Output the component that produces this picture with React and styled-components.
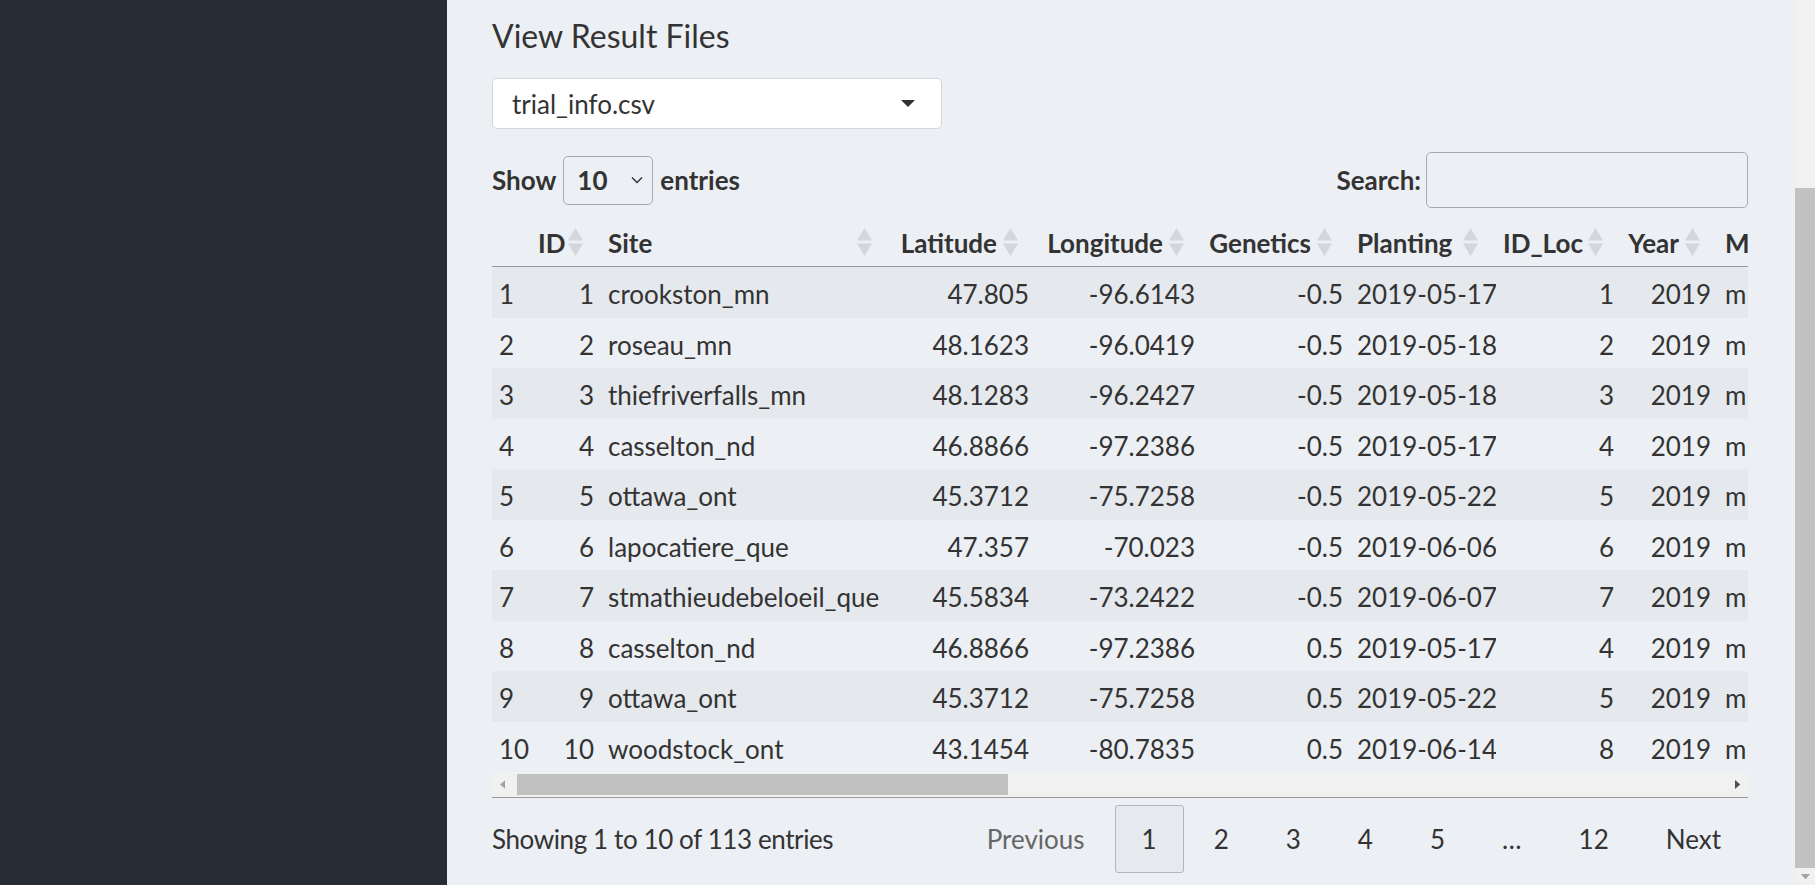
import React from 'react';
import styled, { createGlobalStyle } from 'styled-components';

const GlobalStyle = createGlobalStyle`
  html, body {
    margin: 0;
    padding: 0;
    height: 100%;
    overflow: hidden;
  }
  body {
    font-family: Lato, 'Liberation Sans', sans-serif;
    color: #333;
    background: #eceff4;
  }
  * { box-sizing: border-box; }
`;

const Shell = styled.div`
  display: flex;
  height: 100vh;
`;

const Sidebar = styled.aside`
  flex: 0 0 447px;
  background: #262d35;
`;

const Main = styled.main`
  flex: 1;
  min-width: 0;
  padding: 17px 47px 0 45px;
  background: #eceff4;
`;

const PageScroll = styled.div`
  flex: 0 0 20px;
  display: flex;
  flex-direction: column;
  background: #f1f1f1;
  padding-top: 188px;
`;

const PageThumb = styled.div`
  flex: 1;
  background: #c1c1c1;
`;

const ArrowBox = styled.div`
  flex: 0 0 ${(p) => p.$size || 19}px;
  display: flex;
  align-items: center;
  justify-content: center;
  color: ${(p) => (p.$dim ? '#a3a3a3' : '#505050')};
`;

const Title = styled.h4`
  margin: 0;
  font-size: 32px;
  font-weight: 400;
  line-height: 1.2;
  color: #333;
`;

const FileSelect = styled.div`
  margin-top: 23px;
  width: 450px;
  height: 51px;
  display: flex;
  align-items: center;
  justify-content: space-between;
  padding: 0 26px 0 19px;
  background: #fff;
  border: 1px solid #d4d6da;
  border-radius: 5px;
  font-size: 26px;
`;

const Controls = styled.div`
  margin-top: 23px;
  height: 56px;
  display: flex;
  align-items: center;
  justify-content: space-between;
  font-size: 26px;
  font-weight: 700;
`;

const Label = styled.label`
  display: flex;
  align-items: center;
  gap: ${(p) => p.$gap || 7}px;
`;

const LengthBox = styled.div`
  width: 90px;
  height: 49px;
  display: flex;
  align-items: center;
  justify-content: space-between;
  padding: 0 9px 0 13px;
  border: 1px solid #aaa;
  border-radius: 5px;
`;

const SearchInput = styled.div`
  width: 322px;
  height: 56px;
  border: 1px solid #aaa;
  border-radius: 5px;
`;

const ScrollBox = styled.div`
  margin-top: 9px;
  overflow: hidden;
  width: 100%;
`;

const Table = styled.table`
  table-layout: fixed;
  border-collapse: separate;
  border-spacing: 0;
  width: ${(p) => p.$width}px;
  font-size: 26px;
`;

const Th = styled.th`
  position: relative;
  height: 50px;
  padding: 2px ${(p) => (p.$sortable ? 39 : 7)}px 0 7px;
  text-align: ${(p) => p.$align};
  font-weight: 700;
  white-space: nowrap;
  overflow: hidden;
  border-bottom: 1px solid #999;
`;

const SortIcon = styled.svg`
  position: absolute;
  right: 18px;
  top: 50%;
  transform: translateY(-50%);
`;

const Tr = styled.tr`
  height: 50.5px;
  background: ${(p) => (p.$odd ? '#e5e8ed' : 'transparent')};
`;

const Td = styled.td`
  padding: 3px 7px 0;
  text-align: ${(p) => p.$align};
  white-space: nowrap;
  overflow: hidden;
`;

const HScroll = styled.div`
  height: 26px;
  display: flex;
  align-items: center;
  background: #f1f1f1;
  border-bottom: 1px solid #999;
`;

const HTrack = styled.div`
  flex: 1;
  height: 100%;
  display: flex;
  align-items: center;
  padding-left: 4px;
`;

const HThumb = styled.div`
  width: ${(p) => p.$width}px;
  height: 21px;
  background: #c1c1c1;
`;

const Footer = styled.div`
  margin-top: 7px;
  display: flex;
  align-items: center;
  justify-content: space-between;
  font-size: 26px;
`;

const Info = styled.span`
  letter-spacing: -0.4px;
`;

const Paginate = styled.nav`
  display: flex;
  align-items: center;
  gap: 3px;
`;

const PageButton = styled.span`
  height: 68px;
  display: flex;
  align-items: center;
  padding: 0 26px;
  border: 1px solid ${(p) => (p.$active ? '#b3b5b9' : 'transparent')};
  border-radius: 3px;
  background: ${(p) => (p.$active ? '#e6e9ee' : 'transparent')};
  color: ${(p) => (p.$disabled ? '#666' : '#333')};
`;

const columns = [
  { key: 'rn', label: '', w: 39, align: 'left', sort: false },
  { key: 'id', label: 'ID', w: 70, align: 'right', sort: true },
  { key: 'site', label: 'Site', w: 289, align: 'left', sort: true },
  { key: 'lat', label: 'Latitude', w: 146, align: 'right', sort: true },
  { key: 'lon', label: 'Longitude', w: 166, align: 'right', sort: true },
  { key: 'gen', label: 'Genetics', w: 148, align: 'right', sort: true },
  { key: 'plant', label: 'Planting', w: 146, align: 'left', sort: true },
  { key: 'loc', label: 'ID_Loc', w: 125, align: 'right', sort: true },
  { key: 'year', label: 'Year', w: 97, align: 'right', sort: true },
  { key: 'mgmt', label: 'Management', w: 190, align: 'left', sort: true },
];

const rows = [
  ['1', '1', 'crookston_mn', '47.805', '-96.6143', '-0.5', '2019-05-17', '1', '2019', 'mn_north'],
  ['2', '2', 'roseau_mn', '48.1623', '-96.0419', '-0.5', '2019-05-18', '2', '2019', 'mn_north'],
  ['3', '3', 'thiefriverfalls_mn', '48.1283', '-96.2427', '-0.5', '2019-05-18', '3', '2019', 'mn_north'],
  ['4', '4', 'casselton_nd', '46.8866', '-97.2386', '-0.5', '2019-05-17', '4', '2019', 'mn_south'],
  ['5', '5', 'ottawa_ont', '45.3712', '-75.7258', '-0.5', '2019-05-22', '5', '2019', 'mn_east'],
  ['6', '6', 'lapocatiere_que', '47.357', '-70.023', '-0.5', '2019-06-06', '6', '2019', 'mn_east'],
  ['7', '7', 'stmathieudebeloeil_que', '45.5834', '-73.2422', '-0.5', '2019-06-07', '7', '2019', 'mn_east'],
  ['8', '8', 'casselton_nd', '46.8866', '-97.2386', '0.5', '2019-05-17', '4', '2019', 'mn_south'],
  ['9', '9', 'ottawa_ont', '45.3712', '-75.7258', '0.5', '2019-05-22', '5', '2019', 'mn_east'],
  ['10', '10', 'woodstock_ont', '43.1454', '-80.7835', '0.5', '2019-06-14', '8', '2019', 'mn_south'],
];

const tableWidth = columns.reduce((s, c) => s + c.w, 0);

function Sort() {
  return (
    <SortIcon width="15" height="28" viewBox="0 0 15 28">
      <polygon points="0,12.5 7.5,0 15,12.5" fill="#d3d6dc" />
      <polygon points="0,15.5 7.5,28 15,15.5" fill="#d3d6dc" />
    </SortIcon>
  );
}

function Tri({ dir, size = 8 }) {
  const pts = {
    down: `0,0 ${size},0 ${size / 2},${size * 0.6}`,
    left: `${size * 0.6},0 ${size * 0.6},${size} 0,${size / 2}`,
    right: `0,0 0,${size} ${size * 0.6},${size / 2}`,
  }[dir];
  const w = dir === 'down' ? size : size * 0.6;
  const h = dir === 'down' ? size * 0.6 : size;
  return (
    <svg width={w} height={h} viewBox={`0 0 ${w} ${h}`}>
      <polygon points={pts} fill="currentColor" />
    </svg>
  );
}

export default function App() {
  return (
    <>
      <GlobalStyle />
      <Shell>
        <Sidebar />
        <Main>
          <Title>View Result Files</Title>
          <FileSelect>
            <span>trial_info.csv</span>
            <svg width="14" height="7" viewBox="0 0 14 7">
              <polygon points="0,0 14,0 7,7" fill="#333" />
            </svg>
          </FileSelect>

          <Controls>
            <Label>
              Show
              <LengthBox>
                <span>10</span>
                <svg width="12" height="8" viewBox="0 0 12 8">
                  <polyline points="1,1.5 6,6.5 11,1.5" fill="none" stroke="#333" strokeWidth="1.5" />
                </svg>
              </LengthBox>
              entries
            </Label>
            <Label $gap={5}>
              Search:
              <SearchInput />
            </Label>
          </Controls>

          <ScrollBox>
            <Table $width={tableWidth}>
              <colgroup>
                {columns.map((c) => (
                  <col key={c.key} style={{ width: c.w }} />
                ))}
              </colgroup>
              <thead>
                <tr>
                  {columns.map((c) => (
                    <Th key={c.key} $align={c.align} $sortable={c.sort}>
                      {c.label}
                      {c.sort && <Sort />}
                    </Th>
                  ))}
                </tr>
              </thead>
              <tbody>
                {rows.map((r, i) => (
                  <Tr key={i} $odd={i % 2 === 0}>
                    {r.map((v, j) => (
                      <Td key={j} $align={columns[j].align}>
                        {v}
                      </Td>
                    ))}
                  </Tr>
                ))}
              </tbody>
            </Table>
          </ScrollBox>
          <HScroll>
            <ArrowBox $size={21} $dim>
              <Tri dir="left" size={9} />
            </ArrowBox>
            <HTrack>
              <HThumb $width={491} />
            </HTrack>
            <ArrowBox $size={21}>
              <Tri dir="right" size={9} />
            </ArrowBox>
          </HScroll>

          <Footer>
            <Info>Showing 1 to 10 of 113 entries</Info>
            <Paginate>
              <PageButton $disabled>Previous</PageButton>
              <PageButton $active>1</PageButton>
              <PageButton>2</PageButton>
              <PageButton>3</PageButton>
              <PageButton>4</PageButton>
              <PageButton>5</PageButton>
              <PageButton>…</PageButton>
              <PageButton>12</PageButton>
              <PageButton>Next</PageButton>
            </Paginate>
          </Footer>
        </Main>
        <PageScroll>
          <PageThumb />
          <ArrowBox $size={17} $dim>
            <Tri dir="down" size={9} />
          </ArrowBox>
        </PageScroll>
      </Shell>
    </>
  );
}
